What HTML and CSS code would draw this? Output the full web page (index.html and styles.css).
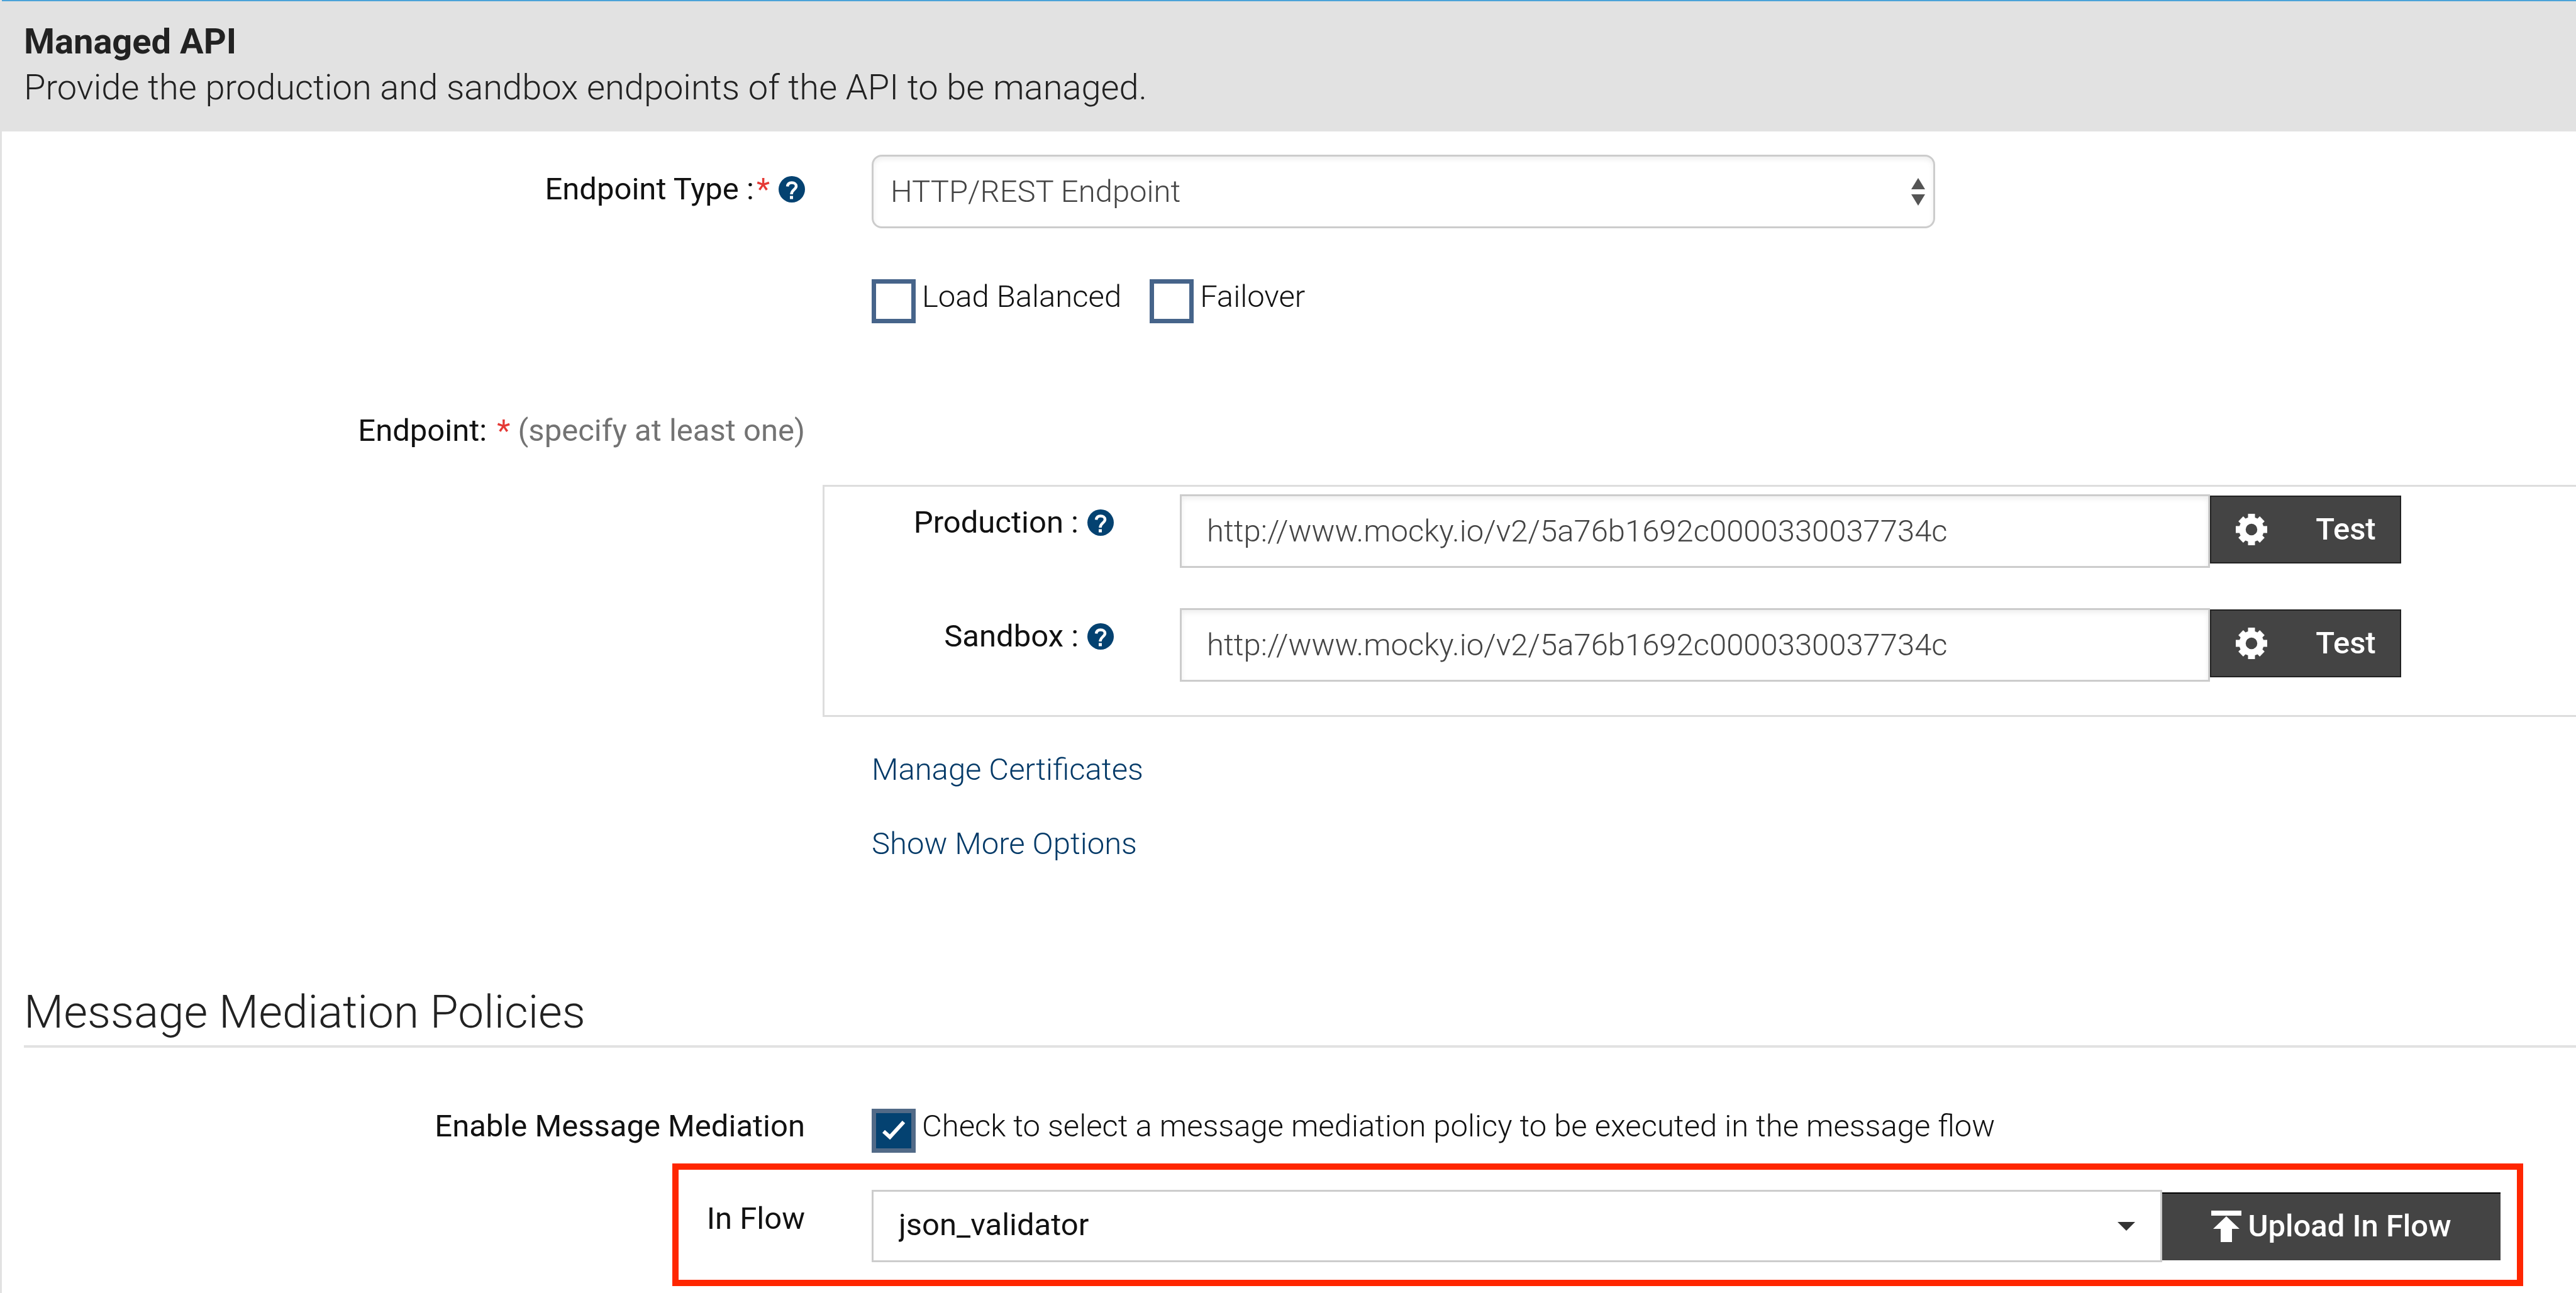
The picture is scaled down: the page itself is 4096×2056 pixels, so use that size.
FILE: index.html
```html
<!DOCTYPE html>
<html lang="en">
<head>
<meta charset="utf-8">
<title>Managed API</title>
<link rel="stylesheet" href="styles.css">
</head>
<body>
<svg class="sprite" aria-hidden="true">
  <symbol id="help" viewBox="0 0 42 42">
    <circle cx="21" cy="21" r="21" fill="#044271"/>
    <path d="M14 16.500c.5-4 3-6 7-6s7 2 7 5.500c0 5.500-7.500 5.500-7.500 13" fill="none" stroke="#fff" stroke-width="4.500"/>
    <path d="M18 31.500h5v5h-5z" fill="#fff"/>
  </symbol>
  <symbol id="gear" viewBox="-25 -25 50 50">
    <circle r="14.500" fill="none" stroke="#fff" stroke-width="10.500"/>
    <path d="M0-25V-16M0 16V25M-25 0H-16M16 0H25M-17-17L-11-11M11 11L17 17M17-17L11-11M-11 11L-17 17" fill="none" stroke="#fff" stroke-width="11"/>
  </symbol>
</svg>
<header class="intro">
  <h1 class="intro-title">Managed API</h1>
  <p class="intro-text">Provide the production and sandbox endpoints of the API to be managed.</p>
</header>
<main>
  <form>
    <div class="row">
      <label class="label label-field" for="type">Endpoint Type :<span class="required">*</span><svg class="help"><use href="#help"/></svg></label>
      <div class="field">
        <span class="select-wrap type-wrap">
          <select class="control type" id="type"><option>HTTP/REST Endpoint</option></select>
          <svg class="updown" viewBox="0 0 22 44" aria-hidden="true"><path d="M11 0l11 18H0zM0 26h22L11 44z" fill="#555"/></svg>
        </span>
      </div>
    </div>
    <div class="row row-checks">
      <div class="field checks">
        <label class="check"><input class="box" type="checkbox">Load Balanced</label>
        <label class="check"><input class="box" type="checkbox">Failover</label>
      </div>
    </div>
    <div class="row row-endpoint">
      <div class="label">Endpoint: <span class="required">*</span> <span class="hint">(specify at least one)</span></div>
    </div>
    <div class="row row-panel">
      <div class="panel">
        <div class="endpoint">
          <label class="label endpoint-label" for="production">Production :<svg class="help"><use href="#help"/></svg></label>
          <div class="group">
            <input class="control url" id="production" type="text" value="http://www.mocky.io/v2/5a76b1692c0000330037734c">
            <button class="btn btn-gear" type="button" aria-label="Settings"><svg class="gear"><use href="#gear"/></svg></button>
            <button class="btn btn-test" type="button">Test</button>
          </div>
        </div>
        <div class="endpoint">
          <label class="label endpoint-label" for="sandbox">Sandbox :<svg class="help"><use href="#help"/></svg></label>
          <div class="group">
            <input class="control url" id="sandbox" type="text" value="http://www.mocky.io/v2/5a76b1692c0000330037734c">
            <button class="btn btn-gear" type="button" aria-label="Settings"><svg class="gear"><use href="#gear"/></svg></button>
            <button class="btn btn-test" type="button">Test</button>
          </div>
        </div>
      </div>
    </div>
    <div class="row row-links">
      <div class="field links">
        <a href="#certificates">Manage Certificates</a>
        <a href="#options">Show More Options</a>
      </div>
    </div>
    <h2 class="section">Message Mediation Policies</h2>
    <div class="row row-enable">
      <label class="label" for="enable">Enable Message Mediation</label>
      <div class="field checks">
        <label class="check"><input class="box" id="enable" type="checkbox" checked>Check to select a message mediation policy to be executed in the message flow</label>
      </div>
    </div>
    <div class="row row-flow">
      <label class="label flow-label" for="flow">In Flow</label>
      <div class="field group flow-group">
        <span class="select-wrap flow-wrap">
          <select class="control flow" id="flow"><option>json_validator</option></select>
          <svg class="caret" viewBox="0 0 28 14" aria-hidden="true"><path d="M0 0h28L14 14z" fill="#333"/></svg>
        </span>
        <button class="btn btn-upload" type="button"><svg class="upload" viewBox="0 0 48 50" aria-hidden="true"><path d="M0 0h48v8H0zM24 9l21 20H33v21H15V29H3z" fill="#fff"/></svg>Upload In Flow</button>
      </div>
    </div>
  </form>
</main>
</body>
</html>
```
FILE: styles.css
```css
* {
  box-sizing: border-box;
}

body {
  margin: 0;
  min-height: 100vh;
  border-left: 3px solid #e2e2e2;
  background: #fff;
  color: #111;
  font: 300 49px/70px Roboto, sans-serif;
}

.sprite {
  position: absolute;
  width: 0;
  height: 0;
}

.intro {
  padding: 28px 35px 33px;
  border-top: 2px solid #4ba3d8;
  background: #e2e2e2;
  color: #222;
  font-size: 56px;
  line-height: 73px;
}

.intro-title {
  margin: 0;
  font-size: inherit;
  font-weight: 700;
}

.intro-text {
  margin: 0;
}

main {
  padding-top: 37px;
}

.row {
  display: grid;
  grid-template-columns: 1277fr 2710fr;
  column-gap: 106px;
}

.label {
  text-align: right;
  font-weight: 400;
}

.label-field {
  padding-top: 20px;
}

.required {
  margin-left: 4px;
  color: #e53935;
}

.hint {
  color: #737373;
}

.help {
  width: 42px;
  height: 42px;
  margin-left: 14px;
  vertical-align: -5px;
}

.field {
  grid-column: 2;
  min-width: 0;
}

.control {
  width: 100%;
  height: 117px;
  margin: 0;
  border: 3px solid #ccc;
  border-radius: 0;
  outline: none;
  background: #fff;
  color: #444;
  font: inherit;
  appearance: none;
}

.select-wrap {
  display: grid;
  align-items: center;
}

.select-wrap > * {
  grid-area: 1 / 1;
}

.type-wrap {
  width: 62.4%;
}

.type {
  padding: 0 27px;
  border-radius: 16px;
  box-shadow: inset 0 4px 8px #eee;
}

.updown {
  justify-self: end;
  width: 22px;
  height: 44px;
  margin-right: 16px;
  pointer-events: none;
}

.row-checks {
  margin-top: 74px;
}

.checks {
  display: flex;
  gap: 45px;
}

.check {
  display: flex;
  gap: 10px;
}

.box {
  width: 70px;
  height: 70px;
  margin: 7px 0 0;
  border: 7px solid #46648a;
  background: #fff;
  appearance: none;
}

.box:checked {
  border-color: #526a87;
  background: #044271 url("data:image/svg+xml,%3Csvg xmlns='http://www.w3.org/2000/svg' viewBox='0 0 56 56'%3E%3Cpath d='M12 29l10 9 22-24' fill='none' stroke='%23fff' stroke-width='6'/%3E%3C/svg%3E") center / 100%;
}

.row-endpoint {
  margin-top: 136px;
}

.row-panel {
  margin-top: 51px;
}

.panel {
  grid-column: 2;
  display: grid;
  gap: 64px;
  margin-left: -78px;
  padding: 12px 0 53px;
  border: 3px solid #ddd;
  border-right: 0;
}

.endpoint {
  display: grid;
  grid-template-columns: 460fr 1942fr 173fr;
  column-gap: 105px;
}

.endpoint-label {
  padding-top: 10px;
}

.group {
  display: flex;
  align-items: flex-start;
}

.url {
  flex: 1;
  min-width: 0;
  padding: 0 40px;
  box-shadow: inset 0 4px 8px #eee;
}

.btn {
  display: flex;
  align-items: center;
  justify-content: center;
  height: 108px;
  margin: 2px 0 0;
  padding: 0;
  border: 2px solid #222;
  background: #444;
  color: #fff;
  font: inherit;
  font-weight: 500;
}

.btn-gear {
  width: 130px;
  border-right: 0;
}

.btn-test {
  width: 174px;
  border-left: 0;
}

.gear {
  width: 50px;
  height: 50px;
}

.row-links {
  margin-top: 49px;
}

.links {
  display: grid;
  justify-items: start;
  gap: 48px;
}

.links a {
  color: #043a68;
  text-decoration: none;
}

.section {
  margin: 187px 0 0 35px;
  padding-bottom: 8px;
  border-bottom: 4px solid #e2e2e2;
  color: #222;
  font-size: 73px;
  font-weight: 300;
  line-height: 90px;
}

.row-enable {
  margin-top: 90px;
}

.row-flow {
  position: relative;
  margin-top: 59px;
}

/* highlight frame laid over the In Flow row */
.row-flow::after {
  content: "";
  position: absolute;
  inset: -42px 84px -38px calc(26.1% - 2px);
  border: 10px solid #ff2600;
  pointer-events: none;
}

.flow-label {
  padding-top: 11px;
}

.flow-group {
  padding-right: 120px;
}

.flow-wrap {
  flex: 1;
}

.flow {
  height: 115px;
  padding: 0 40px 4px;
  color: #111;
  font-weight: 400;
}

.caret {
  justify-self: end;
  width: 28px;
  height: 14px;
  margin-right: 43px;
  pointer-events: none;
}

.btn-upload {
  gap: 10px;
  width: 538px;
  margin-top: 4px;
  padding-bottom: 2px;
  border-width: 2px 0 0;
  border-color: #000;
}

.upload {
  width: 48px;
  height: 50px;
}
```
